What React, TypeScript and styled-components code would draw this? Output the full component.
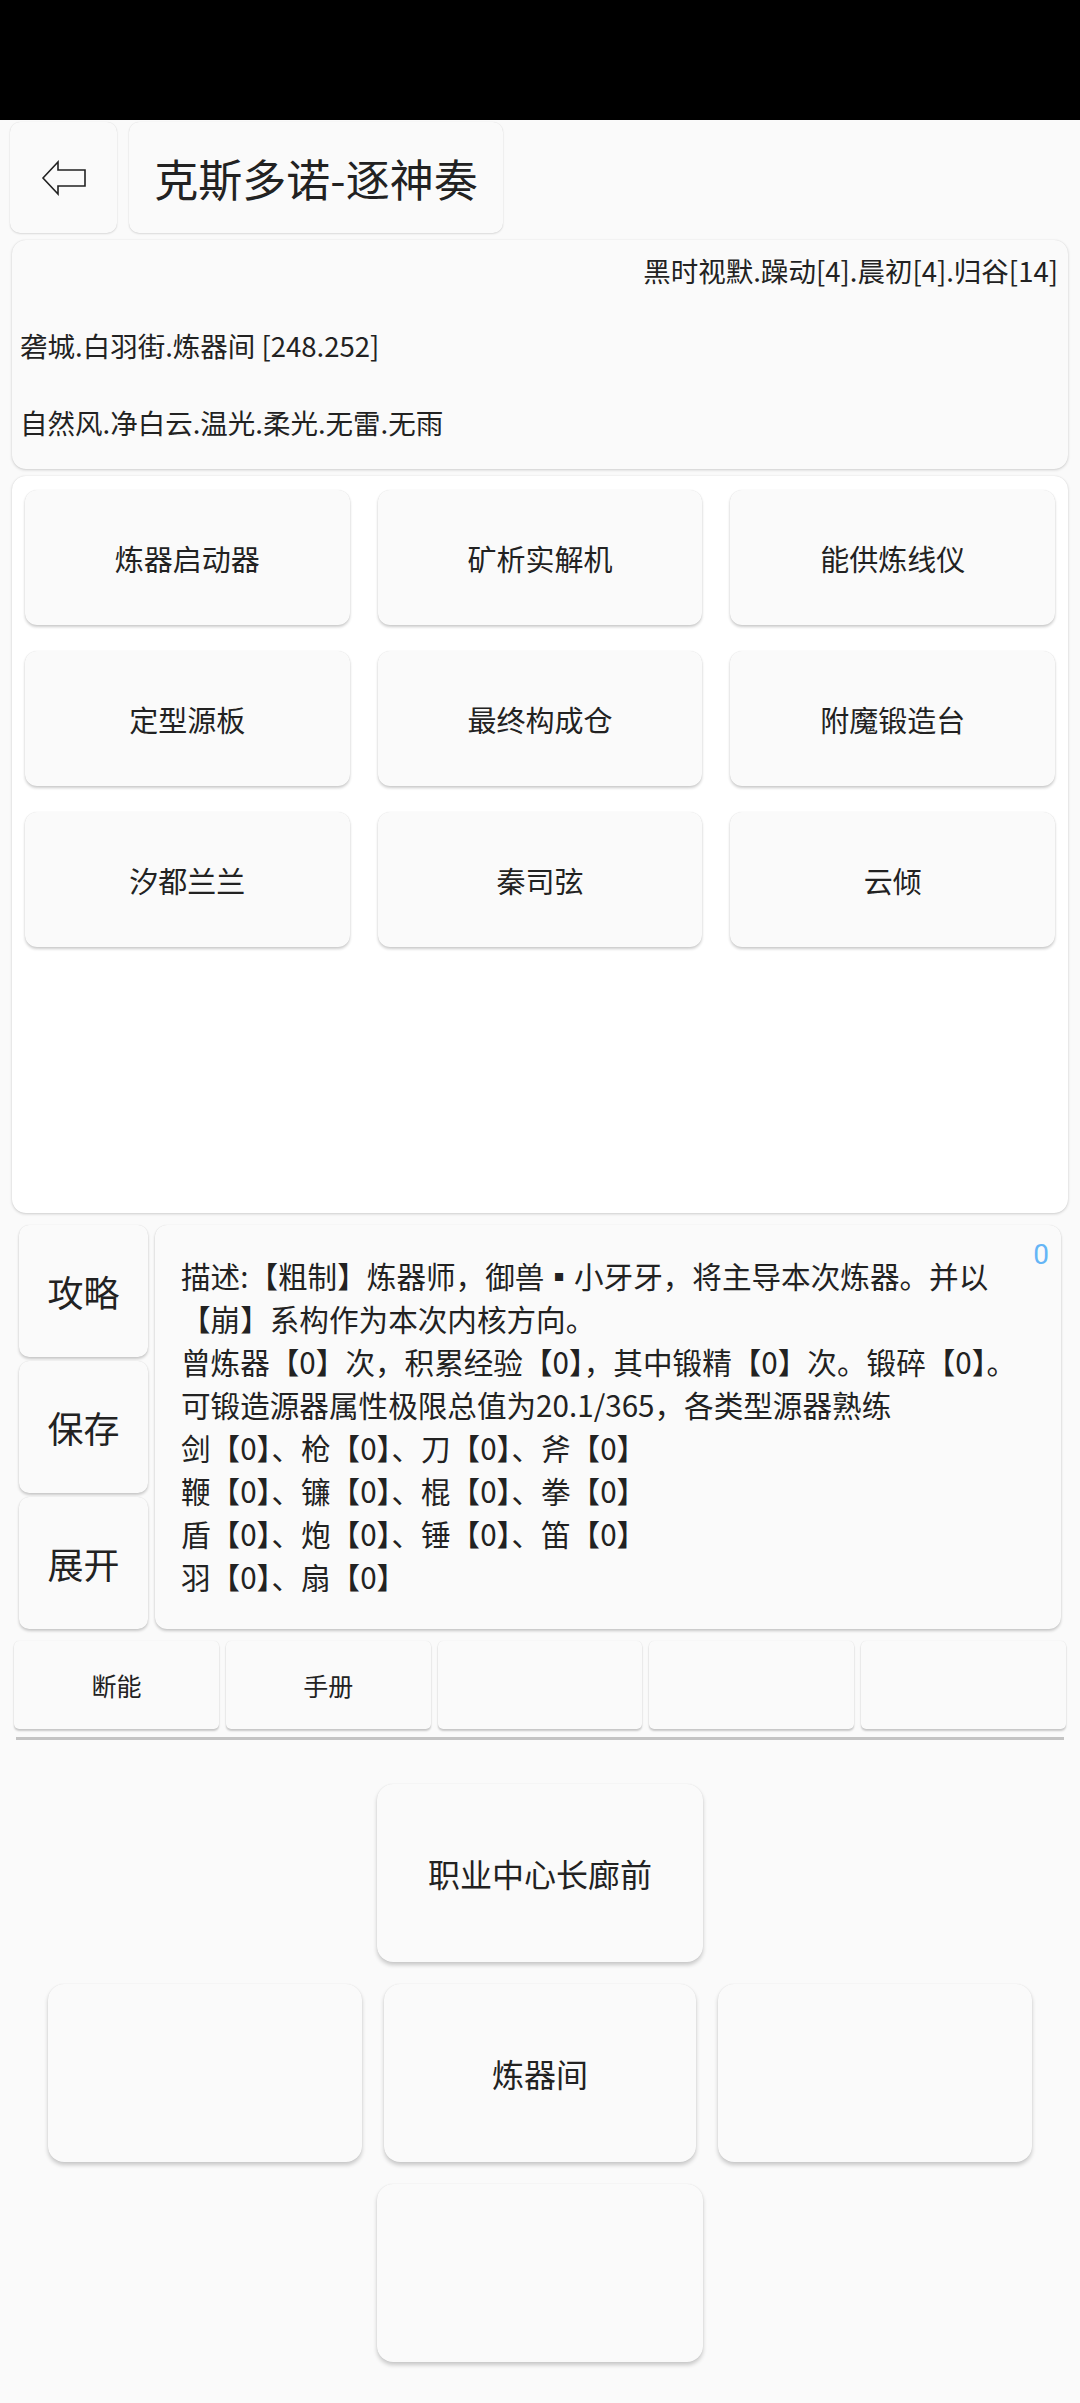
import styled, { createGlobalStyle } from "styled-components";

const GlobalStyle = createGlobalStyle`
    html, body {
        margin: 0;
        padding: 0;
        background: #fafafa;
        font-family: "Noto Sans CJK SC", "Noto Sans", sans-serif;
        color: #222;
    }
`;

const Page = styled.div`
    width: 1080px;
    min-height: 2403px;
    background: #fafafa;
    display: flex;
    flex-direction: column;
`;

const StatusBar = styled.div`
    height: 120px;
    background: #000;
`;

const Header = styled.div`
    display: flex;
    gap: 12px;
    padding: 2px 10px 0;
    height: 111px;
`;

const HeadBox = styled.div<{ $w: number }>`
    width: ${(p) => p.$w}px;
    background: #fafafa;
    border-radius: 10px;
    box-shadow: 0 1px 2px rgba(0, 0, 0, 0.12), 0 0 1px rgba(0, 0, 0, 0.12);
    display: flex;
    align-items: center;
    justify-content: center;
    font-size: 44px;
    color: #222;
`;

const InfoCard = styled.div`
    margin: 7px 12px 0;
    height: 229px;
    box-sizing: border-box;
    padding: 10px 10px 0 8px;
    background: #fafafa;
    border-radius: 14px;
    box-shadow: 0 1px 3px rgba(0, 0, 0, 0.18), 0 0 1px rgba(0, 0, 0, 0.1);
    display: flex;
    flex-direction: column;
`;

const InfoLine = styled.div<{ $right?: boolean; $top: number }>`
    height: 40px;
    line-height: 40px;
    font-size: 27.5px;
    margin-top: ${(p) => p.$top}px;
    text-align: ${(p) => (p.$right ? "right" : "left")};
    white-space: nowrap;
`;

const GridCard = styled.div`
    margin: 7px 12px 0;
    height: 737px;
    box-sizing: border-box;
    padding: 14px 13px;
    background: #fff;
    border-radius: 14px;
    box-shadow: 0 1px 3px rgba(0, 0, 0, 0.18), 0 0 1px rgba(0, 0, 0, 0.1);
    display: grid;
    grid-template-columns: repeat(3, 1fr);
    grid-auto-rows: 135px;
    column-gap: 28px;
    row-gap: 26px;
    align-content: start;
`;

const Tile = styled.div`
    background: #fafafa;
    border-radius: 12px;
    box-shadow: 0 2px 3px rgba(0, 0, 0, 0.2), 0 0 1px rgba(0, 0, 0, 0.12);
    display: flex;
    align-items: center;
    justify-content: center;
    font-size: 29px;
`;

const DescRow = styled.div`
    display: flex;
    gap: 7px;
    margin: 12px 19px 0;
    height: 404px;
`;

const SideCol = styled.div`
    width: 129px;
    flex-shrink: 0;
    display: flex;
    flex-direction: column;
    gap: 4px;
`;

const SideButton = styled.div`
    flex: 1;
    background: #fafafa;
    border-radius: 10px;
    box-shadow: 0 2px 3px rgba(0, 0, 0, 0.2), 0 0 1px rgba(0, 0, 0, 0.12);
    display: flex;
    align-items: center;
    justify-content: center;
    font-size: 36px;
`;

const DescCard = styled.div`
    flex: 1;
    min-width: 0;
    position: relative;
    box-sizing: border-box;
    padding: 29px 20px 0 26px;
    background: #fafafa;
    border-radius: 12px;
    box-shadow: 0 2px 3px rgba(0, 0, 0, 0.2), 0 0 1px rgba(0, 0, 0, 0.12);
    font-size: 29.6px;
    line-height: 43px;
`;

const DescLine = styled.div`
    white-space: nowrap;
`;

const Counter = styled.span`
    position: absolute;
    top: 16px;
    right: 12px;
    line-height: 1;
    font-size: 28px;
    color: #64b5f6;
    font-family: "Roboto", sans-serif;
`;

const ToolBar = styled.div`
    display: grid;
    grid-template-columns: repeat(5, 1fr);
    gap: 7px;
    margin: 12px 14px 0;
    height: 88px;
`;

const ToolButton = styled.div`
    background: #fafafa;
    border-radius: 5px;
    box-shadow: 0 2px 2px rgba(0, 0, 0, 0.2), 0 0 1px rgba(0, 0, 0, 0.12);
    display: flex;
    align-items: center;
    justify-content: center;
    font-size: 25px;
`;

const Divider = styled.div`
    margin: 8px 16px 0;
    height: 3px;
    background: #c4c4c4;
`;

const Nav = styled.div`
    margin-top: 44px;
    display: flex;
    flex-direction: column;
    align-items: center;
    gap: 22px;
`;

const NavRow = styled.div`
    display: flex;
    justify-content: center;
    gap: 22px;
`;

const NavButton = styled.div<{ $w: number }>`
    width: ${(p) => p.$w}px;
    height: 178px;
    background: #fafafa;
    border-radius: 16px;
    box-shadow: 0 3px 4px rgba(0, 0, 0, 0.2), 0 0 1px rgba(0, 0, 0, 0.12);
    display: flex;
    align-items: center;
    justify-content: center;
    font-size: 32px;
`;

const BackArrow = () => (
    <svg width="46" height="36" viewBox="0 0 46 36">
        <path d="M2 18 L17 2 L17 10 L44 10 L44 26 L17 26 L17 34 Z" fill="none" stroke="#222" strokeWidth="1.6" strokeLinejoin="miter" />
    </svg>
);

const rooms = ["炼器启动器", "矿析实解机", "能供炼线仪", "定型源板", "最终构成仓", "附魔锻造台", "汐都兰兰", "秦司弦", "云倾"];

const desc = [
    "描述:【粗制】炼器师，御兽▪小牙牙，将主导本次炼器。并以",
    "【崩】系构作为本次内核方向。",
    "曾炼器【0】次，积累经验【0】，其中锻精【0】次。锻碎【0】。",
    "可锻造源器属性极限总值为20.1/365，各类型源器熟练",
    "剑【0】、枪【0】、刀【0】、斧【0】",
    "鞭【0】、镰【0】、棍【0】、拳【0】",
    "盾【0】、炮【0】、锤【0】、笛【0】",
    "羽【0】、扇【0】",
];

const tools = ["断能", "手册", "", "", ""];

const App = () => {
    return (
        <Page>
            <GlobalStyle />
            <StatusBar />
            <Header>
                <HeadBox $w={107}>
                    <BackArrow />
                </HeadBox>
                <HeadBox $w={374}>克斯多诺-逐神奏</HeadBox>
            </Header>
            <InfoCard>
                <InfoLine $right $top={0}>黑时视默.躁动[4].晨初[4].归谷[14]</InfoLine>
                <InfoLine $top={35}>砻城.白羽街.炼器间 [248.252]</InfoLine>
                <InfoLine $top={37}>自然风.净白云.温光.柔光.无雷.无雨</InfoLine>
            </InfoCard>
            <GridCard>
                {rooms.map((r) => (
                    <Tile key={r}>{r}</Tile>
                ))}
            </GridCard>
            <DescRow>
                <SideCol>
                    <SideButton>攻略</SideButton>
                    <SideButton>保存</SideButton>
                    <SideButton>展开</SideButton>
                </SideCol>
                <DescCard>
                    <Counter>0</Counter>
                    {desc.map((line, i) => (
                        <DescLine key={i}>{line}</DescLine>
                    ))}
                </DescCard>
            </DescRow>
            <ToolBar>
                {tools.map((t, i) => (
                    <ToolButton key={i}>{t}</ToolButton>
                ))}
            </ToolBar>
            <Divider />
            <Nav>
                <NavButton $w={326}>职业中心长廊前</NavButton>
                <NavRow>
                    <NavButton $w={314} />
                    <NavButton $w={312}>炼器间</NavButton>
                    <NavButton $w={314} />
                </NavRow>
                <NavButton $w={326} />
            </Nav>
        </Page>
    );
};

export default App;
